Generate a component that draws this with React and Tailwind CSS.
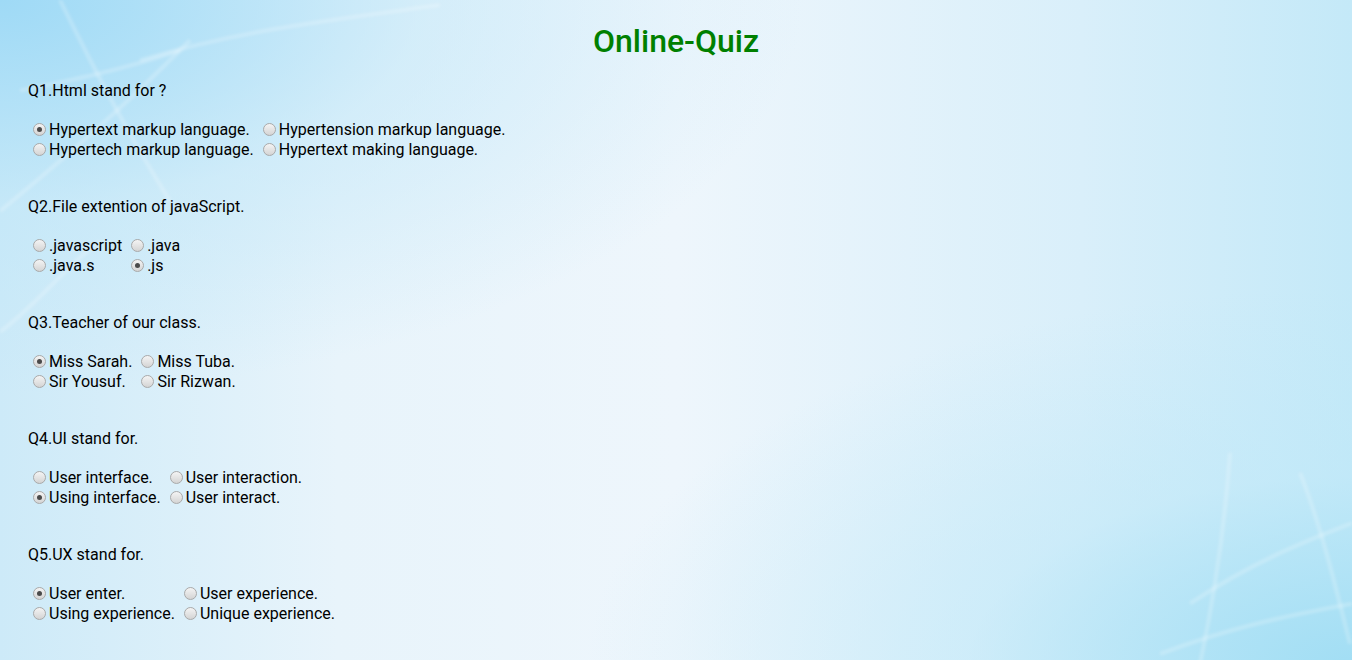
const questions = [
  {
    q: 'Q1.Html stand for ?',
    options: [
      'Hypertext markup language.',
      'Hypertension markup language.',
      'Hypertech markup language.',
      'Hypertext making language.',
    ],
    checked: 0,
  },
  {
    q: 'Q2.File extention of javaScript.',
    options: ['.javascript', '.java', '.java.s', '.js'],
    checked: 3,
  },
  {
    q: 'Q3.Teacher of our class.',
    options: ['Miss Sarah.', 'Miss Tuba.', 'Sir Yousuf.', 'Sir Rizwan.'],
    checked: 0,
  },
  {
    q: 'Q4.UI stand for.',
    options: ['User interface.', 'User interaction.', 'Using interface.', 'User interact.'],
    checked: 2,
  },
  {
    q: 'Q5.UX stand for.',
    options: ['User enter.', 'User experience.', 'Using experience.', 'Unique experience.'],
    checked: 0,
  },
];

const Radio = ({ on }) => (
  <span className="mt-[3px] ml-[5px] mr-[3px] flex h-[13px] w-[13px] shrink-0 items-center justify-center rounded-full border border-[#a9a9a9] bg-[linear-gradient(to_bottom,#f4f4f4,#d4d4d4)]">
    {on && <span className="h-[5px] w-[5px] rounded-full bg-[#4a4a4a]" />}
  </span>
);

// faint network strokes in the corners of the backdrop
const Backdrop = () => (
  <svg className="pointer-events-none absolute inset-0 h-full w-full blur-[1.5px]" viewBox="0 0 1352 660" preserveAspectRatio="none">
    <g fill="none" stroke="#ffffff" strokeOpacity="0.22" strokeWidth="4">
      <path d="M0 210 C 60 160, 110 120, 190 40" />
      <path d="M60 0 C 90 60, 120 120, 170 200" />
      <path d="M140 60 C 240 30, 330 20, 440 5" />
      <path d="M0 330 C 40 300, 70 260, 100 240" />
      <path d="M20 90 C 70 80, 120 70, 180 50" />
      <path d="M1352 520 C 1300 540, 1250 560, 1190 600" />
      <path d="M1230 450 C 1225 520, 1215 590, 1200 660" />
      <path d="M1352 600 C 1300 610, 1240 620, 1160 650" />
      <path d="M1300 470 C 1320 520, 1335 580, 1350 640" />
    </g>
  </svg>
);

export default function App() {
  return (
    <div className="relative min-h-[660px] w-full overflow-hidden bg-[radial-gradient(ellipse_at_top_left,#9fdaf6_0%,rgba(190,230,248,0.5)_22%,rgba(255,255,255,0)_42%),radial-gradient(ellipse_at_bottom_right,#a2def4_0%,rgba(190,232,248,0.5)_20%,rgba(255,255,255,0)_40%),linear-gradient(to_right,#cdeaf8_0%,#e8f4fb_25%,#eef6fc_50%,#d9effa_80%,#c4e9f8_100%)] font-['Roboto','Liberation_Sans',sans-serif] text-[16px] text-black">
      <Backdrop />
      <div className="relative px-[28px] pt-[22px] pb-[40px]">
        <h1 className="text-center text-[32px] font-medium leading-[38px] text-[#008000]">Online-Quiz</h1>
        {questions.map((item, i) => (
          <div key={i} className={i === 0 ? 'mt-[21px]' : 'mt-[37px]'}>
            <p className="leading-5">{item.q}</p>
            <div className="mt-[19px] grid w-fit grid-cols-[auto_auto] gap-x-[4px]">
              {item.options.map((opt, j) => (
                <label key={j} className="flex h-5 items-start leading-5 whitespace-nowrap">
                  <Radio on={j === item.checked} />
                  <span>{opt}</span>
                </label>
              ))}
            </div>
          </div>
        ))}
      </div>
    </div>
  );
}
